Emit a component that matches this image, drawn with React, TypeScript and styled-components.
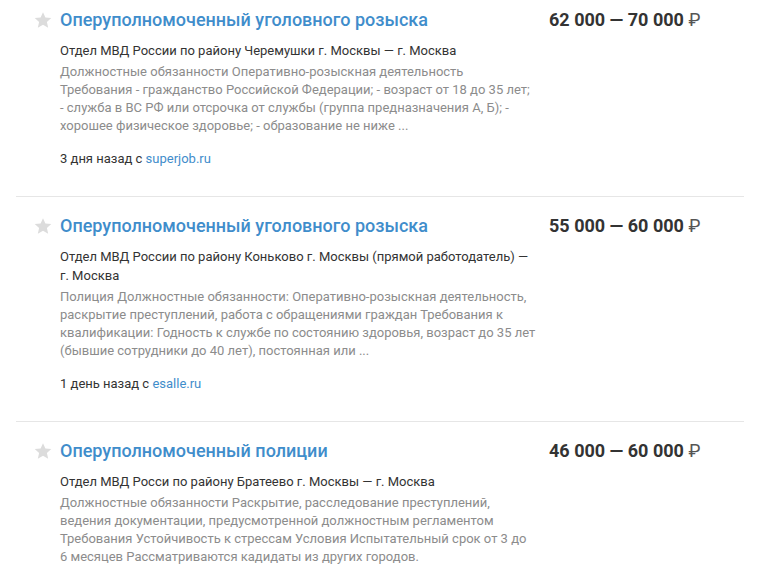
import React from "react";
import styled, { createGlobalStyle } from "styled-components";

const Global = createGlobalStyle`
  html, body { margin: 0; padding: 0; background: #fff; }
  body { font-family: Roboto, "Liberation Sans", Arial, sans-serif; }
`;

const List = styled.div`
  width: 728px;
  margin-left: 16px;
`;

const Item = styled.div<{ $first?: boolean }>`
  display: flex;
  padding: ${(p) => (p.$first ? "8px" : "17px")} 0 28px 18px;
  border-top: ${(p) => (p.$first ? "none" : "1px solid #e6e6e6")};
`;

const StarBox = styled.div`
  width: 26px;
  flex: 0 0 26px;
  height: 24px;
  display: flex;
  align-items: center;
`;

const Main = styled.div`
  width: 480px;
  flex: 0 0 480px;
`;

const Title = styled.a`
  display: block;
  font-size: 18px;
  line-height: 24px;
  font-weight: 500;
  color: #3f8dcb;
  text-decoration: none;
`;

const Company = styled.div`
  margin-top: 9px;
  font-size: 13px;
  line-height: 19px;
  color: #333;
`;

const Desc = styled.div`
  margin-top: 3px;
  font-size: 13px;
  line-height: 18px;
  color: #8c8c8c;
  white-space: pre-line;
`;

const Meta = styled.div`
  margin-top: 15px;
  font-size: 13px;
  line-height: 18px;
  color: #333;
`;

const Link = styled.a`
  color: #3f8dcb;
  text-decoration: none;
`;

const Salary = styled.div`
  margin-left: 9px;
  font-size: 18px;
  line-height: 24px;
  font-weight: 700;
  color: #333;
  white-space: nowrap;
`;

const Rub = styled.span`
  font-weight: 400;
  color: #555;
`;

const Star = () => (
  <svg width="18" height="18" viewBox="0 0 24 24">
    <path
      d="M12 1.5l3.2 7.1 7.8.8-5.8 5.2 1.7 7.7L12 18.4l-6.9 3.9 1.7-7.7L1 9.4l7.8-.8z"
      fill="#dcdcdc"
    />
  </svg>
);

type Vac = {
  title: string;
  salary: string;
  company: string;
  desc: string;
  when?: string;
  source?: string;
};

const data: Vac[] = [
  {
    title: "Оперуполномоченный уголовного розыска",
    salary: "62 000 — 70 000",
    company: "Отдел МВД России по району Черемушки г. Москвы — г. Москва",
    desc:
      "Должностные обязанности Оперативно-розыскная деятельность\nТребования - гражданство Российской Федерации; - возраст от 18 до 35 лет;\n- служба в ВС РФ или отсрочка от службы (группа предназначения А, Б); - хорошее физическое здоровье; - образование не ниже ...",
    when: "3 дня назад с ",
    source: "superjob.ru",
  },
  {
    title: "Оперуполномоченный уголовного розыска",
    salary: "55 000 — 60 000",
    company:
      "Отдел МВД России по району Коньково г. Москвы (прямой работодатель) — г. Москва",
    desc:
      "Полиция Должностные обязанности: Оперативно-розыскная деятельность, раскрытие преступлений, работа с обращениями граждан Требования к квалификации: Годность к службе по состоянию здоровья, возраст до 35 лет (бывшие сотрудники до 40 лет), постоянная или ...",
    when: "1 день назад с ",
    source: "esalle.ru",
  },
  {
    title: "Оперуполномоченный полиции",
    salary: "46 000 — 60 000",
    company: "Отдел МВД Росси по району Братеево г. Москвы — г. Москва",
    desc:
      "Должностные обязанности Раскрытие, расследование преступлений, ведения документации, предусмотренной должностным регламентом Требования Устойчивость к стрессам Условия Испытательный срок от 3 до 6\u00a0месяцев Рассматриваются кадидаты из других городов.",
  },
];

export default function App() {
  return (
    <>
      <Global />
      <List>
        {data.map((v, i) => (
          <Item key={i} $first={i === 0}>
            <StarBox>
              <Star />
            </StarBox>
            <Main>
              <Title href="#">{v.title}</Title>
              <Company>{v.company}</Company>
              <Desc>{v.desc}</Desc>
              {v.when && (
                <Meta>
                  {v.when}
                  <Link href="#">{v.source}</Link>
                </Meta>
              )}
            </Main>
            <Salary>
              {v.salary} <Rub>₽</Rub>
            </Salary>
          </Item>
        ))}
      </List>
    </>
  );
}
